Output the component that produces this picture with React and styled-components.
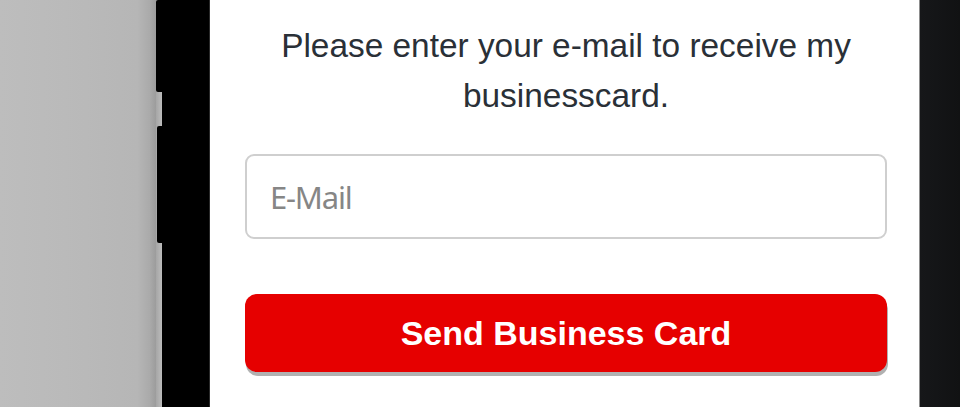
import React from "react";
import styled, { createGlobalStyle } from "styled-components";

const Global = createGlobalStyle`
  html, body { margin: 0; padding: 0; background: #b9b9b9; overflow: hidden; }
  * { box-sizing: border-box; }
`;

const Stage = styled.div`
  display: flex;
  width: 960px;
  height: 407px;
  overflow: hidden;
`;

const Backdrop = styled.div`
  width: 156px;
  flex: none;
  background: linear-gradient(to right, #bdbdbd 0%, #b9b9b9 55%, #b6b6b6 88%, #aaaaaa 96%, #9c9c9c 100%);
`;

const SideRail = styled.div`
  width: 6px;
  flex: none;
  display: flex;
  flex-direction: column;
  background: linear-gradient(to right, #a6a6a6, #bcbcbc);
`;

const SideKey = styled.div`
  height: ${(p) => p.$h}px;
  margin-top: ${(p) => p.$top}px;
  margin-left: ${(p) => p.$left}px;
  background: #000;
  border-radius: 2px 0 0 2px;
`;

const Bezel = styled.div`
  width: 48px;
  flex: none;
  background: #000;
  border-right: 1px solid #2a2a2a;
`;

const Screen = styled.main`
  width: 709px;
  flex: none;
  background: #fff;
  padding: 21px 32px 0 35px;
  display: flex;
  flex-direction: column;
`;

const RightBezel = styled.div`
  flex: 1;
  background: linear-gradient(to right, #161719 0%, #141517 40%, #111213 100%);
  border-left: 1px solid #8d8d8d;
`;

const Prompt = styled.p`
  margin: 0;
  font-family: "Liberation Sans", Arial, sans-serif;
  font-size: 33.4px;
  line-height: 49.5px;
  color: #2a3037;
  text-align: center;
`;

const EmailInput = styled.input`
  margin-top: 34px;
  height: 85px;
  width: 100%;
  border: 2px solid #cfcfcf;
  border-radius: 9px;
  padding: 0 20px 0 23px;
  font-family: "Noto Sans", "Open Sans", sans-serif;
  font-size: 31px;
  letter-spacing: -1.2px;
  color: #333;
  outline: none;
  background: #fff;
  &::placeholder {
    color: #868686;
    opacity: 1;
  }
`;

const SendButton = styled.button`
  margin-top: 55px;
  height: 78px;
  width: 100%;
  border: none;
  border-radius: 12px;
  background: #e60000;
  box-shadow: 1px 4px 0 #b1b1b1;
  color: #fff;
  font-family: "Liberation Sans", Arial, sans-serif;
  font-weight: 700;
  font-size: 34px;
  cursor: pointer;
  padding: 0;
`;

export default function App() {
  return (
    <>
      <Global />
      <Stage>
        <Backdrop />
        <SideRail>
          <SideKey $h={92} $top={0} $left={0} />
          <SideKey $h={117} $top={34} $left={1} />
        </SideRail>
        <Bezel />
        <Screen>
          <Prompt>
            Please enter your e-mail to receive my
            <br />
            businesscard.
          </Prompt>
          <EmailInput type="email" placeholder="E-Mail" />
          <SendButton type="button">Send Business Card</SendButton>
        </Screen>
        <RightBezel />
      </Stage>
    </>
  );
}
